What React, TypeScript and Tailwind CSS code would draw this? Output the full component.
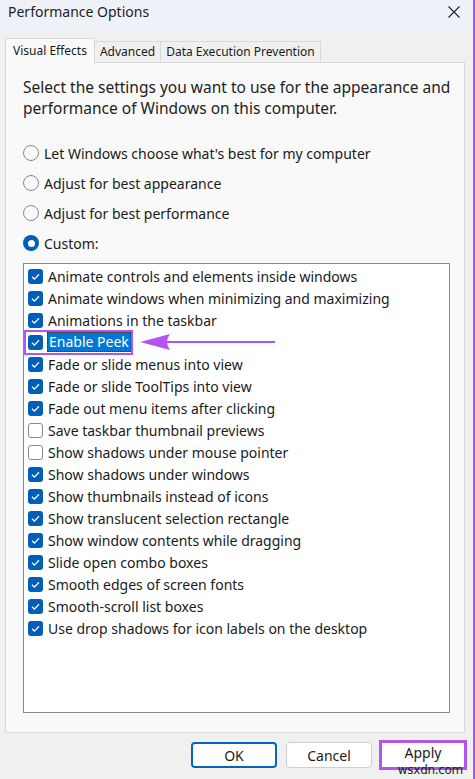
import React from 'react';

const font = { fontFamily: '"Noto Sans", "Open Sans", sans-serif' };

const items: { label: string; checked: boolean }[] = [
  { label: 'Animate controls and elements inside windows', checked: true },
  { label: 'Animate windows when minimizing and maximizing', checked: true },
  { label: 'Animations in the taskbar', checked: true },
  { label: 'Enable Peek', checked: true },
  { label: 'Fade or slide menus into view', checked: true },
  { label: 'Fade or slide ToolTips into view', checked: true },
  { label: 'Fade out menu items after clicking', checked: true },
  { label: 'Save taskbar thumbnail previews', checked: false },
  { label: 'Show shadows under mouse pointer', checked: false },
  { label: 'Show shadows under windows', checked: true },
  { label: 'Show thumbnails instead of icons', checked: true },
  { label: 'Show translucent selection rectangle', checked: true },
  { label: 'Show window contents while dragging', checked: true },
  { label: 'Slide open combo boxes', checked: true },
  { label: 'Smooth edges of screen fonts', checked: true },
  { label: 'Smooth-scroll list boxes', checked: true },
  { label: 'Use drop shadows for icon labels on the desktop', checked: true },
];

const radios = [
  { label: "Let Windows choose what's best for my computer", on: false },
  { label: 'Adjust for best appearance', on: false },
  { label: 'Adjust for best performance', on: false },
  { label: 'Custom:', on: true },
];

const Check = ({ checked }: { checked: boolean }) =>
  checked ? (
    <div className="w-[15px] h-[15px] rounded-[3px] bg-[#005fb8] flex items-center justify-center shrink-0">
      <svg width="11" height="11" viewBox="0 0 11 11">
        <path d="M2 5.8 L4.4 8.1 L9 3.2" fill="none" stroke="white" strokeWidth="1.3" />
      </svg>
    </div>
  ) : (
    <div className="w-[15px] h-[15px] rounded-[3px] border border-[#8a8a8a] bg-white shrink-0" />
  );

const Radio = ({ on }: { on: boolean }) =>
  on ? (
    <div className="w-[16px] h-[16px] rounded-full bg-[#005fb8] flex items-center justify-center shrink-0">
      <div className="w-[7px] h-[7px] rounded-full bg-white" />
    </div>
  ) : (
    <div className="w-[16px] h-[16px] rounded-full border border-[#8a8a8a] bg-[#f9f9f9] shrink-0" />
  );

const PerformanceOptions: React.FC = () => {
  return (
    <div className="w-[475px] h-[779px] bg-[#f0f0f0] flex flex-col text-[#1a1a1a] border-r-2 border-[#a855f7] overflow-hidden" style={font}>
      {/* title bar */}
      <div className="h-[30px] bg-[#eef1f7] flex items-start justify-between pl-[8px] pr-[12px] pt-[2px]">
        <span className="text-[14px] leading-[20px] text-[#222]">Performance Options</span>
        <svg className="mt-[3px]" width="14" height="14" viewBox="0 0 14 14">
          <path d="M1.5 1.5 L12.5 12.5 M12.5 1.5 L1.5 12.5" stroke="#222" strokeWidth="1.1" />
        </svg>
      </div>

      {/* tabs */}
      <div className="flex items-end pl-[5px] mt-[8px] h-[24px] text-[12px]">
        <div className="h-[25px] px-[7px] bg-[#f9f9f9] border border-b-0 border-[#d9d9d9] flex items-center relative z-10 -mb-px">Visual Effects</div>
        <div className="h-[21px] px-[5px] border-t border-r border-[#d9d9d9] flex items-center">Advanced</div>
        <div className="h-[21px] px-[5px] border-t border-r border-[#d9d9d9] flex items-center">Data Execution Prevention</div>
      </div>

      {/* panel */}
      <div className="ml-[5px] mr-[8px] h-[671px] bg-[#f9f9f9] border border-[#d9d9d9] pl-[17px] pt-[14px] flex flex-col">
        <p className="text-[15.5px] leading-[21px] text-[#222] whitespace-nowrap">
          Select the settings you want to use for the appearance and
          <br />
          performance of Windows on this computer.
        </p>

        <div className="mt-[24px] flex flex-col gap-[10px]">
          {radios.map((r) => (
            <div key={r.label} className="flex items-center gap-[5px] h-[20px] text-[14px]">
              <Radio on={r.on} />
              <span>{r.label}</span>
            </div>
          ))}
        </div>

        <div className="mt-[10px] w-[427px] h-[450px] bg-white border border-[#8a8a8a] pt-[1px] pl-[4px] flex flex-col">
          {items.map((it) => {
            const sel = it.label === 'Enable Peek';
            return (
              <div key={it.label} className="relative flex items-center h-[22px] gap-[5px] text-[14px]">
                {sel ? (
                  <>
                    <div className="flex items-center gap-[4px] -ml-[4px] pl-[2px] h-[25px] border-2 border-[#b154f0]">
                      <Check checked={it.checked} />
                      <span className="bg-[#0078d7] text-white px-[1px] leading-[18px] border border-dotted border-[#333]">{it.label}</span>
                    </div>
                    <svg className="ml-[-1px]" width="140" height="18" viewBox="0 0 140 18">
                      <path d="M26 9 L138 9" stroke="#b154f0" strokeWidth="2" />
                      <path d="M3 9 L33 1 Q27 9 33 17 Z" fill="#b154f0" />
                    </svg>
                  </>
                ) : (
                  <>
                    <Check checked={it.checked} />
                    <span>{it.label}</span>
                  </>
                )}
              </div>
            );
          })}
        </div>
      </div>

      {/* buttons */}
      <div className="flex justify-end items-start pr-[6px] mt-[9px] text-[14px]">
        <button className="w-[86px] h-[26px] bg-white border-2 border-[#0067c0] rounded-[4px]">OK</button>
        <button className="ml-[9px] w-[86px] h-[26px] bg-white border border-[#d0d0d0] rounded-[4px]">Cancel</button>
        <div className="relative ml-[7px] -mt-[2px]">
          <button className="w-[88px] h-[30px] bg-white border-[3px] border-[#b154f0] leading-[20px] pb-[4px]">Apply</button>
          <span className="absolute right-[4px] top-[25px] text-[12px] leading-[11px] text-[#222] tracking-tight" style={{ fontFamily: '"DejaVu Sans", sans-serif' }}>wsxdn.com</span>
        </div>
      </div>
    </div>
  );
};

export default function App() {
  return <PerformanceOptions />;
}
